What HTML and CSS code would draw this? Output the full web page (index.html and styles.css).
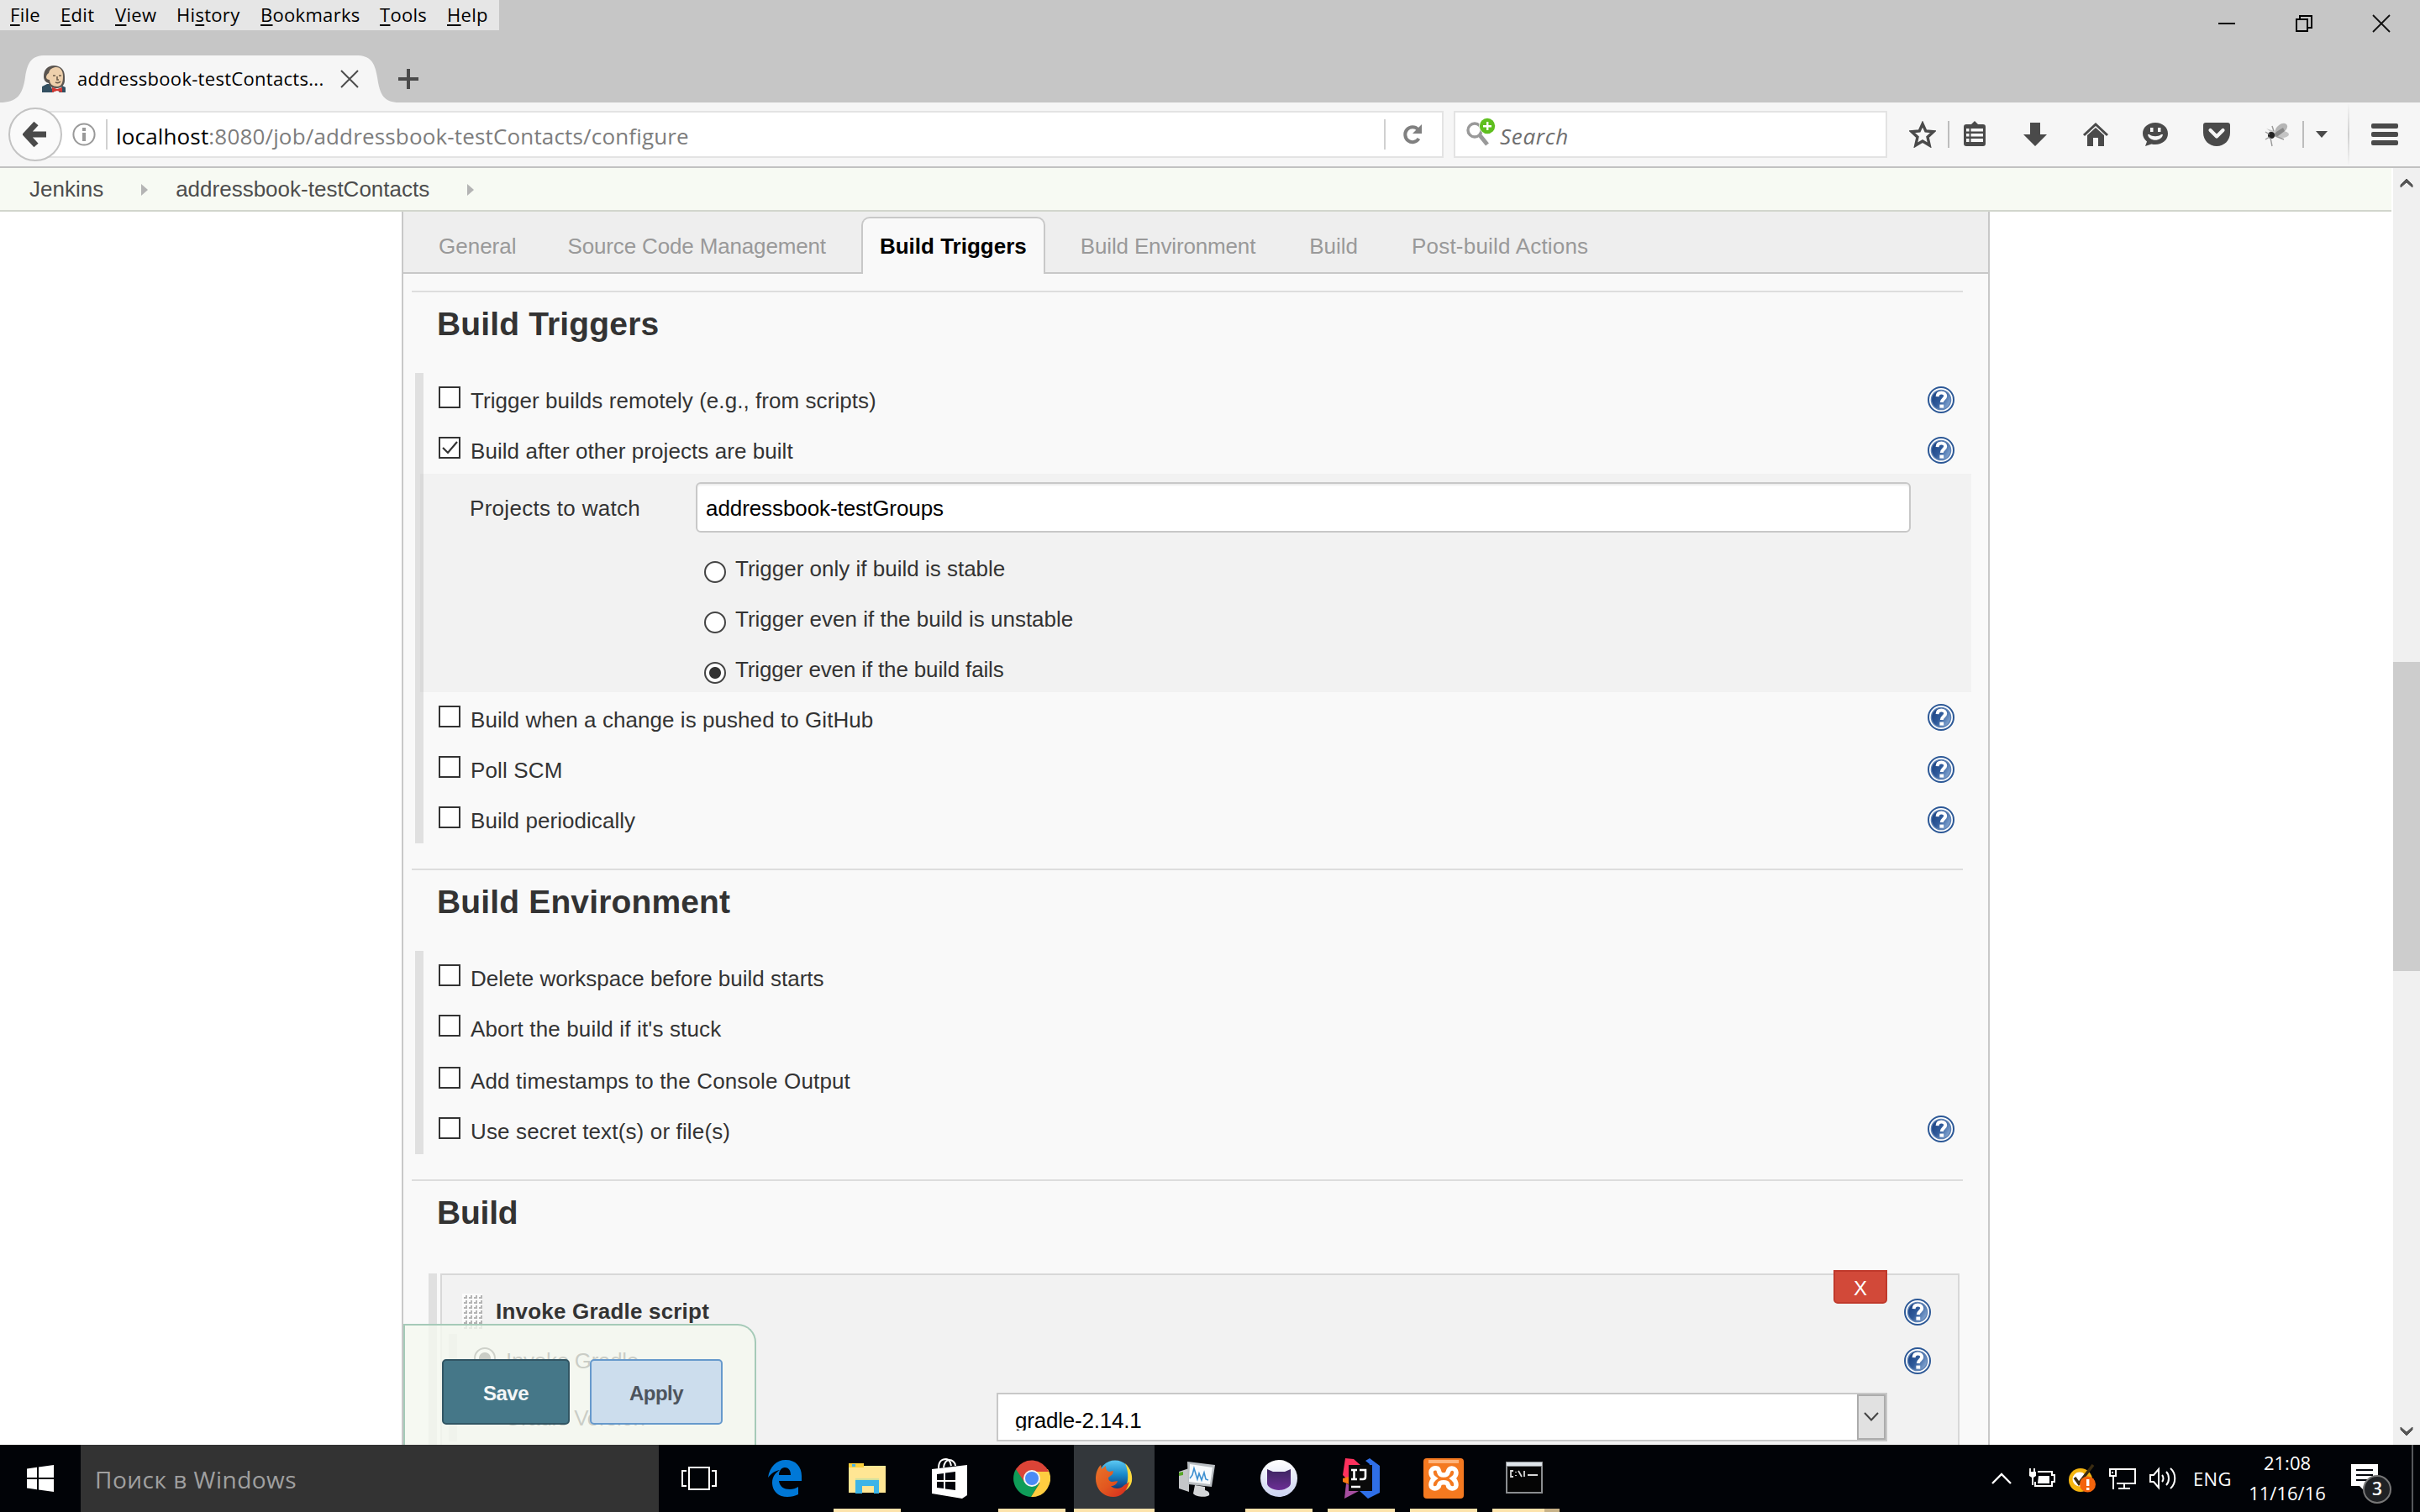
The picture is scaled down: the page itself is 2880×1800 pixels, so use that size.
FILE: index.html
```html
<!DOCTYPE html>
<html lang="en">
<head>
<meta charset="utf-8">
<title>addressbook-testContacts Config [Jenkins]</title>
<link rel="stylesheet" href="styles.css">
</head>
<body>
<svg class="defs" width="0" height="0" aria-hidden="true">
  <defs>
    <linearGradient id="helpFill" x1="0" y1="0.2" x2="1" y2="0.8">
      <stop offset="0" stop-color="#1c4383"/><stop offset="0.45" stop-color="#2f5a9a"/><stop offset="1" stop-color="#8fb0d9"/>
    </linearGradient>
    <linearGradient id="foxGlobe" x1="0" y1="0" x2="0" y2="1">
      <stop offset="0" stop-color="#5cc8f2"/><stop offset="0.45" stop-color="#1787c9"/><stop offset="1" stop-color="#10205c"/>
    </linearGradient>
    <linearGradient id="foxTail" x1="0" y1="0" x2="1" y2="1">
      <stop offset="0" stop-color="#e8742a"/><stop offset="0.5" stop-color="#e2571f"/><stop offset="1" stop-color="#d4261f"/>
    </linearGradient>
    <linearGradient id="gitRing" x1="0" y1="0" x2="0" y2="1">
      <stop offset="0" stop-color="#ffffff"/><stop offset="1" stop-color="#ccd3f0"/>
    </linearGradient>
    <linearGradient id="gitCat" x1="0" y1="0" x2="0" y2="1">
      <stop offset="0" stop-color="#3d2560"/><stop offset="1" stop-color="#6c2f95"/>
    </linearGradient>
    <pattern id="grip" width="6" height="6" patternUnits="userSpaceOnUse">
      <rect width="6" height="6" fill="#fbfbfb"/><path d="M2 4h2V2h2v4H2z" fill="#b4b4b4"/>
    </pattern>
    <symbol id="help" viewBox="0 0 32 32">
      <circle cx="16" cy="16" r="15" fill="#fff" stroke="#2c5896" stroke-width="2"/>
      <circle cx="16" cy="16" r="11.6" fill="url(#helpFill)" stroke="#5f83b5" stroke-width="1.4"/>
      <path d="M11.6 12.2C11.8 8.6 14 7.6 16.4 7.6c2.8 0 4.8 1.5 4.8 4 0 3.4-4.400 3.600-4.400 7.400" fill="none" stroke="#fff" stroke-width="4"/>
      <rect x="14.400" y="21.600" width="4.800" height="4" fill="#fff"/>
    </symbol>
  </defs>
</svg>

<header class="titlebar">
  <div class="titlebar-top">
    <nav class="menubar">
      <span><u>F</u>ile</span><span><u>E</u>dit</span><span><u>V</u>iew</span><span>Hi<u>s</u>tory</span><span><u>B</u>ookmarks</span><span><u>T</u>ools</span><span><u>H</u>elp</span>
    </nav>
    <div class="window-controls">
      <svg width="22" height="22" viewBox="0 0 22 22"><path d="M1 10h20v2H1z"/></svg>
      <svg width="22" height="22" viewBox="0 0 22 22" fill="none" stroke="#000" stroke-width="2"><path d="M2 6h13v14H2zM6 6V2h14v14h-4"/></svg>
      <svg width="22" height="22" viewBox="0 0 22 22" fill="none" stroke="#111" stroke-width="1.800"><path d="M1 1l20 20M21 1L1 21"/></svg>
    </div>
  </div>
  <div class="tabstrip">
    <div class="browser-tab">
      <svg class="tab-shape" width="475" height="56" viewBox="0 0 475 56"><path d="M0 56C20 56 27 47 30 26C33 7 38 0 54 0H424C440 0 446 7 449 26C452 47 457 56 475 56Z" fill="#f6f6f6"/></svg>
      <svg class="favicon" width="32" height="32" viewBox="0 0 32 32">
        <path d="M2 32v-7l6-3h14l8 4v6z" fill="#335061"/>
        <path d="M12 24l4 8h6l4-8z" fill="#f4f4f4"/>
        <path d="M4 13C4 5 9 0 16 0c8 0 13 5 13 13v5c0 5-4 9-9 9-6 0-9-2-10-6C6 20 4 17 4 13z" fill="#5b5550"/>
        <path d="M10 9c1-5 5-7 9-7 5 0 8 4 8 11 0 8-2 12-7 12s-9-3-9-8c-2 0-4-1-4-3s1-4 3-5z" fill="#eed0ac"/>
        <path d="M15 12h3M22 12h3M20 13v4h2M18 20c2 1 4 1 6-1" stroke="#6d5d4b" stroke-width="1.600" fill="none"/>
        <path d="M14 26l6 2 6-2v6l-6-2-6 2z" fill="#d33833"/>
      </svg>
      <span class="tab-title">addressbook-testContacts...</span>
      <svg class="tab-close" width="22" height="22" viewBox="0 0 22 22" stroke="#4d4d4d" stroke-width="2"><path d="M1 1l20 20M21 1L1 21"/></svg>
    </div>
    <svg class="new-tab" width="26" height="26" viewBox="0 0 26 26" fill="#4a4a4a"><path d="M11 1h4v10h10v4H15v10h-4V15H1v-4h10z"/></svg>
  </div>
</header>

<div class="toolbar">
  <div class="back-button"><svg width="30" height="32" viewBox="0 0 30 32"><path d="M16 3L4 16l12 13M5 16h23" fill="none" stroke="#4a4a4a" stroke-width="7"/></svg></div>
  <div class="url-field">
    <svg width="28" height="28" viewBox="0 0 28 28"><circle cx="14" cy="14" r="12.600" fill="none" stroke="#999" stroke-width="2"/><path d="M12 6h4v4h-4zM12 12h4v10h-4z" fill="#999"/></svg>
    <i class="field-rule"></i>
    <span class="url"><b>localhost</b>:8080/job/addressbook-testContacts/configure</span>
    <i class="field-rule reload-rule"></i>
    <svg width="24" height="26" viewBox="0 0 24 26"><path d="M18.500 7A8.800 9 0 1 0 19.500 18" fill="none" stroke="#808080" stroke-width="4"/><path d="M23 1v11H12z" fill="#808080"/></svg>
  </div>
  <div class="search-field">
    <svg width="36" height="34" viewBox="0 0 36 34"><circle cx="10" cy="15" r="8" fill="none" stroke="#999" stroke-width="3.400"/><path d="M16 21l9 11" stroke="#999" stroke-width="5"/><circle cx="25" cy="10" r="10" fill="#fff"/><circle cx="25" cy="10" r="9.200" fill="#5fbf1f"/><path d="M24 5h2.400v4H30v2.400h-3.600V15H24v-3.600h-4V9h4z" fill="#fff"/></svg>
    <span>Search</span>
  </div>
  <div class="toolbar-icons">
    <svg width="32" height="32" viewBox="0 0 32 32"><path d="M16 3.500l3.800 8.500 9.200.8-7 6.400 2.200 9.800-8.200-5-8.200 5L10 19.200l-7-6.400 9.200-.8z" fill="none" stroke="#4a4a4a" stroke-width="3.400"/></svg>
    <i class="icon-rule"></i>
    <svg width="32" height="32" viewBox="0 0 32 32"><path d="M12 4l4-4 4 4h6a3 3 0 0 1 3 3v20a3 3 0 0 1-3 3H6a3 3 0 0 1-3-3V7a3 3 0 0 1 3-3z" fill="#4a4a4a"/><path d="M6 9h3.500v3.500H6zM11.500 9H26v3.500H11.500zM6 15h3.500v3.500H6zM11.500 15H26v3.500H11.500zM6 21h3.500v4H6zM11.500 21H26v4H11.500z" fill="#f6f6f6"/></svg>
    <svg width="32" height="32" viewBox="0 0 32 32"><path d="M10 2h12v14h8L16 30 2 16h8z" fill="#4a4a4a"/></svg>
    <svg width="32" height="32" viewBox="0 0 32 32"><path d="M16 8l10 9v13h-7V20h-6v10H6V17z" fill="#4a4a4a"/><path d="M2 17L16 4l14 13" fill="none" stroke="#4a4a4a" stroke-width="3"/></svg>
    <svg width="32" height="32" viewBox="0 0 32 32"><path d="M15 2c8.500 0 15 5.500 15 13s-6.500 13-15 13c-1.500 0-3-.2-4.500-.6L3 30l2-5.500C2 22 0 19 0 15 0 7.500 6.500 2 15 2z" fill="#4a4a4a"/><path d="M9 8h3.500v5H9zM18 8h3.500v5H18zM6 16c1 9 17 9 18 0h-2c-3 3-11 3-14 0z" fill="#f6f6f6"/></svg>
    <svg width="32" height="32" viewBox="0 0 32 32"><path d="M3 2h26a3 3 0 0 1 3 3v9c0 9-7 16-16 16S0 23 0 14V5a3 3 0 0 1 3-3z" fill="#4a4a4a"/><path d="M8.500 11l7.500 7.500L23.500 11" fill="none" stroke="#f6f6f6" stroke-width="4.200" stroke-linecap="round" stroke-linejoin="round"/></svg>
    <svg width="32" height="32" viewBox="0 0 32 32"><path d="M12 16L3 9l10 3 7-8 6 2-7 8z" fill="#c9c9c9"/><ellipse cx="21" cy="9" rx="8" ry="5" transform="rotate(-35 21 9)" fill="#b5b5b5"/><ellipse cx="22" cy="16" rx="8" ry="4" fill="#c4c4c4"/><path d="M9 19l6-6 8-5 2 4-8 6z" fill="#888"/><circle cx="9" cy="17" r="4" fill="#222"/><path d="M8 20l2 10M14 18l10 4M2 13l5 3M2 22l5-3M12 12l-2-6" stroke="#999" stroke-width="1.400"/></svg>
    <i class="icon-rule"></i>
    <svg width="14" height="8" viewBox="0 0 14 8"><path d="M0 0h14L7 8z" fill="#4a4a4a"/></svg>
    <i class="tall-rule"></i>
    <svg width="32" height="26" viewBox="0 0 32 26" fill="#4a4a4a"><rect width="32" height="6" rx="2"/><rect y="10" width="32" height="6" rx="2"/><rect y="20" width="32" height="6" rx="2"/></svg>
  </div>
</div>

<div class="viewport">
  <main class="page">
    <nav class="breadcrumbs">
      <span>Jenkins</span>
      <svg width="8" height="14" viewBox="0 0 8 14"><path d="M0 0l8 7-8 7z" fill="#b4b4b4"/></svg>
      <span>addressbook-testContacts</span>
      <svg width="8" height="14" viewBox="0 0 8 14"><path d="M0 0l8 7-8 7z" fill="#b4b4b4"/></svg>
    </nav>
    <div class="panel">
      <div class="config-tabs">
        <span>General</span><span class="scm tight">Source Code Management</span><span class="active">Build Triggers</span><span class="tight">Build Environment</span><span>Build</span><span class="post">Post-build Actions</span>
      </div>

      <section class="section">
        <h2>Build Triggers</h2>
        <div class="group">
          <div class="option"><i class="checkbox"></i><span>Trigger builds remotely (e.g., from scripts)</span><svg class="help"><use href="#help"/></svg></div>
          <div class="option"><i class="checkbox"><svg width="22" height="22" viewBox="0 0 22 22"><path d="M3 11l6 6L20 4" fill="none" stroke="#333" stroke-width="2.200"/></svg></i><span>Build after other projects are built</span><svg class="help"><use href="#help"/></svg></div>
          <div class="suboptions">
            <div class="watch"><label>Projects to watch</label><div class="text-input">addressbook-testGroups</div></div>
            <div class="radio-row"><i class="radio"></i><span>Trigger only if build is stable</span></div>
            <div class="radio-row"><i class="radio"></i><span>Trigger even if the build is unstable</span></div>
            <div class="radio-row"><i class="radio checked"></i><span class="tight">Trigger even if the build fails</span></div>
          </div>
          <div class="option"><i class="checkbox"></i><span>Build when a change is pushed to GitHub</span><svg class="help raised"><use href="#help"/></svg></div>
          <div class="option"><i class="checkbox"></i><span class="wide">Poll SCM</span><svg class="help"><use href="#help"/></svg></div>
          <div class="option"><i class="checkbox"></i><span>Build periodically</span><svg class="help"><use href="#help"/></svg></div>
        </div>
      </section>

      <section class="section">
        <h2>Build Environment</h2>
        <div class="group">
          <div class="option"><i class="checkbox"></i><span class="plain">Delete workspace before build starts</span></div>
          <div class="option tall"><i class="checkbox"></i><span class="wide">Abort the build if it's stuck</span></div>
          <div class="option"><i class="checkbox"></i><span class="wide">Add timestamps to the Console Output</span></div>
          <div class="option"><i class="checkbox"></i><span class="wide">Use secret text(s) or file(s)</span><svg class="help raised"><use href="#help"/></svg></div>
        </div>
      </section>

      <section class="section">
        <h2 class="tight">Build</h2>
        <div class="steps">
          <div class="step">
            <div class="step-head">
              <svg class="grip" width="24" height="42"><rect width="24" height="42" fill="url(#grip)"/></svg>
              <b>Invoke Gradle script</b>
              <span class="delete">X</span>
              <svg class="help"><use href="#help"/></svg>
            </div>
            <div class="step-body">
              <div class="step-row"><i class="radio checked"></i><span>Invoke Gradle</span><svg class="help"><use href="#help"/></svg></div>
              <div class="version-row">
                <label>Gradle Version</label>
                <div class="select"><span>gradle-2.14.1</span><i class="select-arrow"><svg width="18" height="12" viewBox="0 0 18 12"><path d="M1 1l8 8.500L17 1" fill="none" stroke="#444" stroke-width="2"/></svg></i></div>
              </div>
            </div>
          </div>
        </div>
      </section>

      <div class="sticky-actions"><span class="btn save">Save</span><span class="btn apply">Apply</span></div>
    </div>
  </main>
  <aside class="scrollbar">
    <svg width="16" height="12" viewBox="0 0 16 12"><path d="M1 11V8l7-7 7 7v3L8 5z" fill="#555" stroke="#555"/></svg>
    <div class="thumb"></div>
    <svg class="down" width="16" height="12" viewBox="0 0 16 12"><path d="M1 1v3l7 7 7-7V1L8 7z" fill="#555" stroke="#555"/></svg>
  </aside>
</div>

<footer class="taskbar">
  <div class="start"><svg width="32" height="32" viewBox="0 0 32 32" fill="#fff"><path d="M0 4.500L12 2.700V15H0zM14 2.400L32 0v15H14zM0 17h12v12.300L0 27.500zM14 17h18v15l-18-2.400z"/></svg></div>
  <div class="search-box">Поиск в Windows</div>
  <div class="task-view"><svg width="42" height="28" viewBox="0 0 42 28" fill="none" stroke="#fff" stroke-width="2"><path d="M9 1h24v26H9zM6 5H1v18h5M36 5h5v18h-5"/></svg></div>
  <div class="apps">
    <div class="app"><svg viewBox="0 0 44 44"><path d="M2 21C4 8 12 0 23 0c12 0 19 8 19 19v6H15c1 7 6 10 13 10 4 0 7-1 10-3v9c-4 2-8 3-13 3C13 44 7 36 7 27c0-7 4-12 9-15-6 1-10 4-14 9zM15 18h14c0-6-3-9-7-9s-7 4-7 9z" fill="#0078d7"/></svg></div>
    <div class="app open"><svg viewBox="0 0 44 44"><path d="M0 4h18v3h26v32H0z" fill="#ffe694"/><path d="M0 4h18v5H0z" fill="#fbd03d"/><path d="M4 5h4v3H4z" fill="#4ab5e8"/><path d="M8 30v-6h28v16h-6V31H16v9H8z" fill="#3cb4e7"/><path d="M8 22h28v2H8z" fill="#cfe0a0"/></svg></div>
    <div class="app"><svg class="tallicon" viewBox="0 0 44 48"><path d="M9 12C9 2 14 1 18 1c3 0 5 3 6 8M15 11c1-7 4-9 7-9s7 3 7 7" fill="none" stroke="#fff" stroke-width="2"/><path d="M1 13l42-5v36l-6 4L1 42z" fill="#fff"/><path d="M7 19l8-1v8H7zM17 17.500L29 16v10H17zM7 28h8v8l-8-1zM17 28h12v10l-12-1.500z" fill="#02040a"/></svg></div>
    <div class="app open"><svg viewBox="0 0 44 44"><path d="M3 11A22 22 0 0 0 21 44L31 28 22 22z" fill="#0f9d58"/><path d="M41 11L22 13l9 15-10 16A22 22 0 0 0 41 11z" fill="#ffcd40"/><path d="M3 11A22 22 0 0 1 42 14H22l-9 12z" fill="#db4437"/><circle cx="22" cy="22" r="10" fill="#f4f4f4"/><circle cx="22" cy="22" r="8" fill="#4a8bf5"/></svg></div>
    <div class="app open current"><svg viewBox="0 0 44 44"><circle cx="23" cy="20" r="19.500" fill="url(#foxGlobe)"/><path d="M35 4c6 6 9 13 8 21-1 6-5 10-9 12 5-9 6-22 1-33z" fill="#ffd93b"/><path d="M40 26c-3 12-10 18-19 18C9 44 0 35 0 22 0 16 2 10 6 6l1 5 5-4c0 4 1 6 4 7l5-1-1 4-5 4c0 3 2 5 5 5l6-1c-1 4-4 6-8 6 4 4 12 4 16-1 3-2 5-3 6-4z" fill="url(#foxTail)"/></svg></div>
    <div class="app"><svg viewBox="0 0 44 44"><path d="M1 14l12-4v28L1 34z" fill="#c4c6c8"/><path d="M1 15l5-1v4l-5 1z" fill="#56a625"/><path d="M11 2l33 4-4 26-28-3z" fill="#b9bec2"/><path d="M14 5l27 4-3 20-25-3z" fill="#f7fafc"/><path d="M14 22l3-4 2-8 4 13 2-7 3 8 3-9 2 8 3 1" fill="none" stroke="#3c8fd0" stroke-width="1.600"/><path d="M20 30l12 2v4c4 1 6 3 5 6-3 3-17 2-19-2z" fill="#d4d6d8"/></svg></div>
    <div class="app open"><svg viewBox="0 0 44 44"><circle cx="22" cy="22" r="22" fill="url(#gitRing)"/><path d="M8 11l7 3h14l7-3v17c0 4-7 8-14 8S8 32 8 28z" fill="url(#gitCat)"/></svg></div>
    <div class="app open"><svg class="tallicon" viewBox="0 0 44 48"><path d="M3 0l10 1 9 8-16 17-6-6z" fill="#fe315d"/><path d="M0 24l7-2v9l-7-3z" fill="#f97a12"/><path d="M2 48L4 30l17 8z" fill="#a74fa0"/><path d="M27 3l5-3 12 9v32l-14 7-10-9 12-32z" fill="#2f6fe8"/><path d="M7 8h28v31H7z" fill="#0a0a0a"/><path d="M10 14h7M13.500 14v11M10 25h7M20 14h7v8c0 2-1 3-3 3h-4M10 34h11" fill="none" stroke="#fff" stroke-width="2.600"/></svg></div>
    <div class="app open"><svg class="wideicon" viewBox="0 0 48 48"><rect width="48" height="48" rx="4" fill="#f47920"/><path d="M6 2h36v4H6z" fill="#ffb37a"/><path d="M16 12c-5-1-7 2-7 5 0 4 4 7 4 7s-4 3-4 8c0 5 9 6 10-1 1-3 9-3 10 0 1 7 10 6 10 1 0-5-4-8-4-8s4-3 4-7c0-5-8-8-10 0-1 4-9 4-10 0-1-3-1-5-3-5z" fill="none" stroke="#fff" stroke-width="5.500"/></svg></div>
    <div class="app open last"><svg viewBox="0 0 44 44"><path d="M0 2h44v38H0z" fill="#8a8d90"/><path d="M1 3h42v4H1z" fill="#dfe5ea"/><path d="M2 8h40v30H2z" fill="#050505"/><path d="M9 13H6v7h3M12 14v1M12 18v1M15 13l4 7M22 13v7M26 18h12" fill="none" stroke="#d8d8d8" stroke-width="1.800"/></svg></div>
  </div>
  <div class="tray">
    <svg width="24" height="14" viewBox="0 0 24 14"><path d="M1 13L12 2l11 11" fill="none" stroke="#fff" stroke-width="2.400"/></svg>
    <svg width="32" height="24" viewBox="0 0 32 24"><path d="M11 4h17v4h3v8h-3v5H8v-5" fill="none" stroke="#fff" stroke-width="2"/><path d="M12 9h13v9H11z" fill="#fff"/><path d="M2 0v4M7 0v4" stroke="#fff" stroke-width="1.800"/><path d="M1 4h8v5L6 11v9H4v-9L1 9z" fill="#fff"/></svg>
    <svg width="32" height="34" viewBox="0 0 32 34"><circle cx="14" cy="19" r="14" fill="#f5b50f"/><circle cx="13" cy="18" r="8.500" fill="#fff"/><path d="M7 16l5 7L29 1" fill="none" stroke="#3a2c12" stroke-width="3.500"/><circle cx="22.500" cy="24" r="9.500" fill="#f4640c"/><path d="M21 18h3.400v8H21zM21 28h3.400v3H21z" fill="#fff"/></svg>
    <svg width="32" height="28" viewBox="0 0 32 28" fill="none" stroke="#fff" stroke-width="2"><path d="M9 3h22v17H9M1 3h7v8H1zM5 11v16M18 20v6M11 26h14M4 6v2"/></svg>
    <svg width="32" height="28" viewBox="0 0 32 28" fill="none" stroke="#fff" stroke-width="2"><path d="M1 10h4l6-7v22l-6-7H1zM15 10c2 2 2 6 0 8M20 6c4 4 4 12 0 16M25 2c7 6 7 18 0 24"/></svg>
    <span class="lang">ENG</span>
    <div class="clock"><span>21:08</span><span>11/16/16</span></div>
    <div class="notify"><svg width="32" height="30" viewBox="0 0 32 30"><path d="M0 0h32v26H18l-4 4-4-4H0z" fill="#fff"/><path d="M6 7h20M6 13h20M6 19h14" stroke="#02040a" stroke-width="2"/></svg><span class="count">3</span></div>
    <i class="show-desktop"></i>
  </div>
</footer>
</body>
</html>
```
FILE: styles.css
```css
* { box-sizing: border-box; }
html, body { margin: 0; }
body {
  width: 2880px;
  height: 1800px;
  overflow: hidden;
  background: #fff;
  font-family: "Liberation Sans", Arial, sans-serif;
  font-size: 26px;
  line-height: 30px;
  color: #333;
}
svg { display: block; flex: none; }
i { display: block; flex: none; font-style: normal; }
span, label { white-space: nowrap; }
.defs { position: absolute; }

/* window title bar */
.titlebar { height: 122px; background: #c6c6c6; font-family: "Open Sans", sans-serif; font-size: 22px; color: #000; letter-spacing: 0.3px; }
.titlebar-top { display: flex; justify-content: space-between; height: 66px; }
.menubar {
  display: grid;
  grid-template-columns: 60px 65px 73px 100px 142px 80px 60px;
  width: 594px;
  height: 36px;
  padding: 2px 0 0 12px;
  background: #e6e6e6;
}
.menubar u { text-underline-offset: 3px; text-decoration-thickness: 2px; }
.window-controls { display: flex; gap: 70px; padding: 17px 35px 0 0; }
.tabstrip { display: flex; height: 56px; }
.browser-tab { position: relative; display: flex; width: 475px; padding-left: 48px; }
.tab-shape { position: absolute; left: 0; top: 0; }
.favicon { position: relative; margin-top: 12px; }
.tab-title { position: relative; width: 313px; margin: 12px 0 0 12px; }
.tab-close { position: relative; margin-top: 17px; }
.new-tab { margin: 15px 0 0 -2px; }

/* navigation toolbar */
.toolbar { display: flex; align-items: center; height: 78px; padding-left: 10px; background: #f6f6f6; border-bottom: 2px solid #c1c1c1; font-family: "Open Sans", sans-serif; line-height: 36px; letter-spacing: 0.16px; }
.back-button { position: relative; display: flex; align-items: center; justify-content: center; flex: none; width: 64px; height: 64px; margin-right: -32px; border: 2px solid #c3c3c3; border-radius: 50%; background: #fafafa; }
.url-field, .search-field { display: flex; align-items: center; flex: none; height: 56px; border: 2px solid #e3e3e3; background: #fff; }
.url-field { width: 1676px; padding-left: 42px; }
.field-rule { width: 2px; height: 36px; background: #d0d0d0; }
.url-field .field-rule { margin-left: 12px; }
.url { flex: 1; margin-left: 10px; padding-top: 4px; color: #7d7d7d; }
.url b { font-weight: 400; color: #000; }
.url-field .reload-rule { margin: 0 20px 0 0; }
.url-field > svg:last-child { margin-right: 23px; }
.search-field { width: 516px; margin-left: 12px; padding-left: 13px; font-style: italic; color: #6e6e6e; letter-spacing: 0.7px; }
.search-field svg { margin-top: -6px; }
.search-field span { margin-left: 4px; padding-top: 4px; }
.toolbar-icons { display: flex; align-items: center; height: 76px; padding-left: 26px; gap: 40px; }
.icon-rule { width: 2px; height: 32px; margin: 0 -26px; background: #bdbdbd; }
.tall-rule { width: 2px; height: 76px; margin: 0 -14px 0 -16px; background: linear-gradient(#f6f6f6, #cfcfcf 50%, #f6f6f6); }

/* page area */
.viewport { display: flex; height: 1520px; }
.page { width: 2848px; height: 1520px; overflow: hidden; background: #fff; }
.breadcrumbs { display: flex; align-items: center; width: 2846px; height: 52px; padding: 0 0 4px 35px; gap: 45px; border-bottom: 2px solid #d2d6cd; background: #f7faf3; color: #4d4d4d; }
.breadcrumbs span { padding-top: 3px; }
.breadcrumbs svg { margin: 5px -12px 0 0; }
.panel { position: relative; width: 1890px; height: 1468px; margin-left: 478px; border: solid #c8c8c8; border-width: 0 2px; background: #f9f9f9; overflow: hidden; }
.config-tabs { display: flex; align-items: flex-end; height: 74px; padding-left: 20px; gap: 20px; border-bottom: 2px solid #c8c8c8; background: #eee; color: #999; }
.config-tabs span { flex: none; height: 68px; margin-bottom: -2px; padding: 18px 20px 0; border: 2px solid transparent; border-bottom: 0; border-radius: 10px 10px 0 0; }
.config-tabs .scm { margin-left: -3px; }
.config-tabs .active { border-color: #c8c8c8; background: #f9f9f9; color: #000; font-weight: 700; }
.config-tabs .post { letter-spacing: 0.2px; }
.tight { letter-spacing: -0.15px; }

.section { width: 1846px; margin: 20px 0 0 10px; padding-top: 16px; border-top: 2px solid #ddd; }
.section + .section { margin-top: 30px; }
h2 { height: 80px; margin: 0; padding-left: 30px; font-size: 39px; line-height: 44px; letter-spacing: 0.15px; }
h2.tight { letter-spacing: -0.2px; }
.group { width: 1852px; margin-left: 4px; border-left: 10px solid #e0e0e0; }
.option { display: flex; align-items: flex-start; height: 60px; padding: 16px 20px 0 18px; }
.option.tall { height: 62px; }
.option span { margin: 2px 0 0 12px; letter-spacing: 0.06px; }
.option .wide { letter-spacing: 0.15px; }
.option .plain { letter-spacing: 0; }
.checkbox { width: 26px; height: 26px; border: 2px solid #333; background: #fff; }
.help { width: 32px; height: 32px; margin-left: auto; }
.help.raised { margin-top: -2px; }
.suboptions { height: 260px; margin-left: -4px; padding: 10px 0 0; border-left: 4px solid #dadada; background: #f2f2f2; }
.watch { display: flex; height: 60px; margin-bottom: 10px; }
.watch label { width: 324px; padding: 16px 0 0 55px; letter-spacing: 0.3px; }
.text-input { width: 1446px; height: 60px; padding: 14px 10px 0; border: 2px solid #c8c8c8; border-radius: 6px; background: #fff; box-shadow: inset 0 2px 2px #eee; color: #000; letter-spacing: -0.08px; }
.radio-row { display: flex; height: 60px; padding: 18px 0 0 334px; }
.radio-row span { margin-left: 11px; }
.radio-row .radio { margin-top: 6px; }
.radio { width: 26px; height: 26px; border: 2px solid #444; border-radius: 50%; background: #fff; }
.radio.checked { background: radial-gradient(circle, #333 0 6.500px, #fff 7.500px); }

/* build steps */
.steps { width: 1822px; height: 240px; margin: 14px 0 0 20px; padding-left: 4px; border-left: 10px solid #e0e0e0; }
.step { height: 240px; border: 2px solid #d8d8d8; background: #f2f2f2; }
.step-head { display: flex; align-items: flex-start; height: 70px; padding: 0 32px 0 24px; }
.grip { margin-top: 22px; }
.step-head b { margin: 28px auto 0 16px; letter-spacing: 0.2px; }
.delete { width: 64px; height: 40px; margin: -6px 20px 0 0; padding-top: 5px; border: 2px solid #c0392b; border-radius: 0 0 5px 5px; background: #d24939; color: #fff; font-size: 24px; line-height: 30px; text-align: center; }
.step-head .help { margin: 28px 0 0; }
.step-body { margin-left: 8px; border-left: 10px solid #e0e0e0; }
.step-row { display: flex; height: 70px; padding: 16px 32px 0 20px; }
.step-row span { margin: 1px 0 0 12px; letter-spacing: -0.3px; }
.version-row { display: flex; }
.version-row label { width: 642px; padding: 15px 0 0 56px; letter-spacing: -0.3px; }
.select { display: flex; justify-content: space-between; width: 1060px; height: 58px; padding-left: 20px; border: 2px solid #c8c8c8; background: #fff; color: #000; }
.select span { height: 27px; margin-top: 16px; overflow: hidden; letter-spacing: -0.2px; }
.select-arrow { display: flex; align-items: center; justify-content: center; width: 34px; border: 2px solid #acacac; background: #e1e1e1; }

.sticky-actions { position: absolute; left: 0; top: 1324px; display: flex; gap: 24px; width: 420px; height: 144px; padding: 40px 0 0 44px; border: 2px solid #a5cab8; border-bottom: 0; border-radius: 0 22px 0 0; background: rgba(245, 249, 240, 0.78); }
.btn { height: 78px; padding-top: 2px; border: 2px solid; border-radius: 5px; font-size: 24px; font-weight: 700; line-height: 74px; text-align: center; letter-spacing: -0.5px; }
.save { width: 152px; border-color: #315563; background: #457788; color: #f3f6f7; }
.apply { width: 158px; border-color: #6699cc; background: #ccdded; color: #4d545d; }

.scrollbar { display: flex; flex-direction: column; align-items: center; width: 32px; padding: 12px 0 10px; background: #f0f0f0; }
.thumb { width: 32px; height: 368px; margin-top: 564px; background: #cdcdcd; }
.scrollbar .down { margin-top: auto; }

/* taskbar */
.taskbar { display: flex; height: 80px; background: #010307; color: #fff; font-family: "Open Sans", sans-serif; }
.start { display: flex; align-items: center; justify-content: center; width: 96px; }
.search-box { width: 688px; padding: 22px 0 0 17px; background: #333; color: #a0a0a0; font-size: 28px; line-height: 38px; letter-spacing: 0.5px; }
.task-view { display: flex; align-items: center; justify-content: center; width: 96px; margin-right: 5px; }
.apps { display: flex; }
.app { position: relative; width: 98px; height: 80px; padding: 18px 27px; }
.app svg { width: 44px; height: 44px; }
.app .tallicon { height: 48px; margin-top: -2px; }
.app .wideicon { width: 48px; height: 48px; margin: -2px; }
.app.open { background: linear-gradient(#fde3ac, #fde3ac) center bottom / 80px 4px no-repeat; }
.app.current { width: 96px; margin: 0 1px; padding-left: 26px; background: linear-gradient(#fde3ac, #fde3ac) center bottom / 96px 4px no-repeat, #33373b; }
.app.last { padding-left: 25px; background: linear-gradient(90deg, #fde3ac 62px, #c7b187 62px) center bottom / 80px 4px no-repeat; }
.tray { display: flex; align-items: center; margin-left: auto; gap: 16px; font-size: 22px; line-height: 36px; }
.tray > svg:first-child { margin-right: 4px; }
.lang { width: 52px; margin-left: 4px; letter-spacing: 0.3px; }
.clock { display: flex; flex-direction: column; align-items: center; width: 94px; margin: -2px 0 0 -3px; }
.notify { position: relative; width: 48px; height: 50px; padding-top: 8px; margin-left: 13px; }
.count { position: absolute; left: 14px; top: 21px; width: 34px; height: 34px; border: 2px solid #777; border-radius: 50%; background: #1f2124; font-size: 21px; font-weight: 600; line-height: 29px; text-align: center; }
.show-desktop { width: 2px; height: 80px; margin: 0 8px 0 8px; background: #55585c; }
```
